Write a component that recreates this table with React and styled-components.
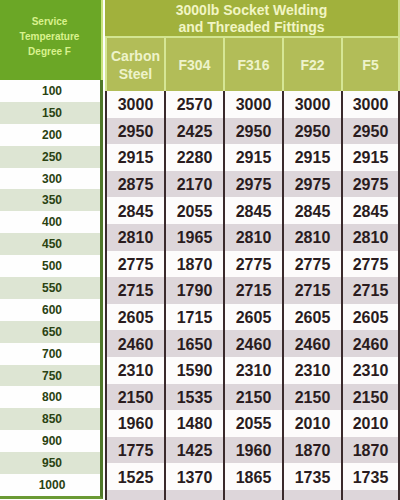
import React from 'react'
import styled, { createGlobalStyle } from 'styled-components'

const temps = [100, 150, 200, 250, 300, 350, 400, 450, 500, 550, 600, 650, 700, 750, 800, 850, 900, 950, 1000]

const grades = ['Carbon Steel', 'F304', 'F316', 'F22', 'F5']

const rows = [
    [3000, 2570, 3000, 3000, 3000],
    [2950, 2425, 2950, 2950, 2950],
    [2915, 2280, 2915, 2915, 2915],
    [2875, 2170, 2975, 2975, 2975],
    [2845, 2055, 2845, 2845, 2845],
    [2810, 1965, 2810, 2810, 2810],
    [2775, 1870, 2775, 2775, 2775],
    [2715, 1790, 2715, 2715, 2715],
    [2605, 1715, 2605, 2605, 2605],
    [2460, 1650, 2460, 2460, 2460],
    [2310, 1590, 2310, 2310, 2310],
    [2150, 1535, 2150, 2150, 2150],
    [1960, 1480, 2055, 2010, 2010],
    [1775, 1425, 1960, 1870, 1870],
    [1525, 1370, 1865, 1735, 1735],
    ['', '', '', '', ''],
]

const App = () => (<>
    <Global />
    <Page>
        <Left>
            <LeftHead>Service<br />Temperature<br />Degree F</LeftHead>
            <TempList>
                {temps.map((t, i) => (
                    <TempRow key={t} shade={i % 2 === 1}>{t}</TempRow>
                ))}
            </TempList>
        </Left>
        <Right>
            <Title>3000lb Socket Welding<br />and Threaded Fittings</Title>
            <Grid>
                {grades.map((g, i) => (
                    <Grade key={g} last={i === grades.length - 1}>
                        {g === 'Carbon Steel' ? <>Carbon<br />Steel</> : g}
                    </Grade>
                ))}
                {rows.map((r, ri) => r.map((v, ci) => (
                    <Cell key={ri + '-' + ci} shade={ri % 2 === 1} last={ci === 4}>{v}</Cell>
                )))}
            </Grid>
        </Right>
    </Page>
</>
)

export default App

const Global = createGlobalStyle`
    body {
        margin: 0;
        background: #fff;
        font-family: "Liberation Sans", Arial, sans-serif;
    }
`

const Page = styled.div`
    display: flex;
    width: 400px;
    height: 500px;
    overflow: hidden;
    background: #fdfdfb;
`

const Left = styled.div`
    width: 103px;
    display: flex;
    flex-direction: column;
`

const LeftHead = styled.div`
    height: 80px;
    box-sizing: border-box;
    background: #6ba726;
    border-right: 2px solid #c9e27e;
    color: #d9f28e;
    font-size: 10px;
    font-weight: bold;
    line-height: 15px;
    text-align: center;
    padding-top: 14px;
    padding-right: 2px;
`

const TempList = styled.div`
    display: flex;
    flex-direction: column;
    border-right: 3px solid #50782a;
    border-bottom: 3px solid #6a9a34;
    height: 416px;
`

const TempRow = styled.div`
    flex: 1;
    display: flex;
    align-items: center;
    justify-content: center;
    padding-left: 4px;
    background: ${p => p.shade ? '#dde5d3' : '#fefefe'};
    color: #2a4212;
    font-size: 12px;
    font-weight: bold;
`

const Right = styled.div`
    width: 295px;
    margin-left: 2px;
    display: flex;
    flex-direction: column;
`

const Title = styled.div`
    height: 42px;
    box-sizing: border-box;
    background: #a1b13c;
    border-bottom: 2px solid #d3e592;
    border-right: 2px solid #cfe08a;
    color: #f1f5c4;
    font-size: 14px;
    font-weight: bold;
    line-height: 17px;
    text-align: center;
    padding-top: 2px;
`

const Grid = styled.div`
    display: grid;
    grid-template-columns: repeat(5, 1fr);
    grid-template-rows: 53px;
    grid-auto-rows: 26.6px;
`

const Grade = styled.div`
    display: flex;
    align-items: center;
    justify-content: center;
    text-align: center;
    background: #b2bd58;
    border-left: 2px solid #d6e695;
    border-right: ${p => p.last ? '2px solid #d6e695' : 'none'};
    color: #eef3cb;
    font-size: 14px;
    font-weight: bold;
    line-height: 18px;
`

const Cell = styled.div`
    display: flex;
    align-items: center;
    justify-content: center;
    padding-top: 2px;
    background: ${p => p.shade ? '#ddd6da' : '#fdfcfc'};
    border-left: 2px solid #3a2a2c;
    border-right: ${p => p.last ? '2px solid #3a2a2c' : 'none'};
    color: #2a1c1e;
    font-size: 16px;
    font-weight: bold;
`
